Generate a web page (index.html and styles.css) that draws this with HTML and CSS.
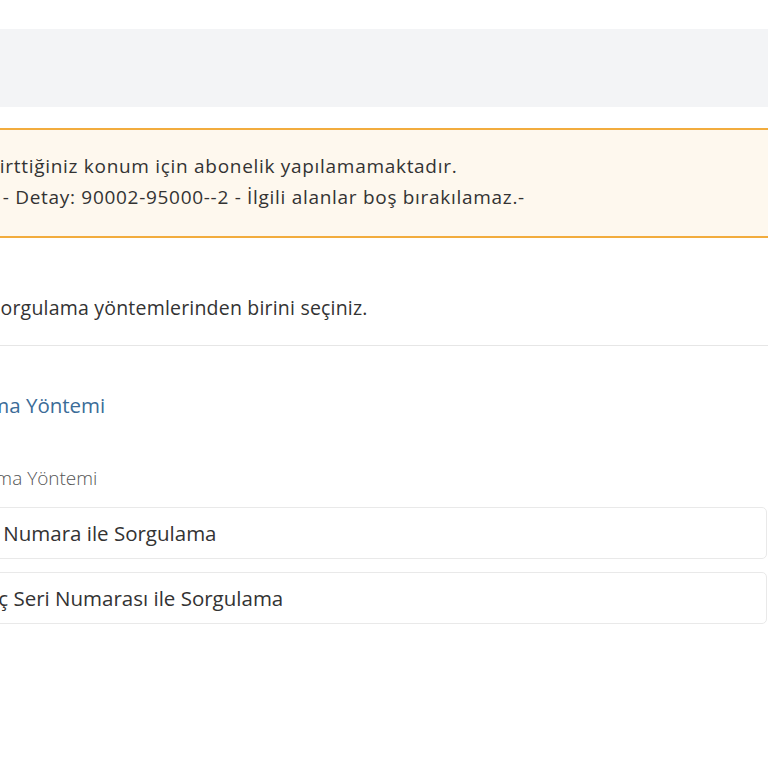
FILE: index.html
```html
<!DOCTYPE html>
<html lang="tr">
<head>
    <meta charset="UTF-8">
    <title>Abonelik</title>
    <link rel="stylesheet" href="styles.css">
</head>
<body>
    <div id="wrap">
        <div class="toolbar"></div>

        <div class="alert">
            <p>Belirttiğiniz konum için abonelik yapılamamaktadır.</p>
            <p>No - Detay: 90002-95000--2 - İlgili alanlar boş bırakılamaz.-</p>
        </div>

        <div class="intro">
            <p>Lütfen sorgulama yöntemlerinden birini seçiniz.</p>
        </div>

        <div class="form">
            <h3>Sorgulama Yöntemi</h3>
            <label class="caption">Sorgulama Yöntemi</label>
            <ul class="options">
                <li><span class="radio"></span><span class="opt">Tekil Numara ile Sorgulama</span></li>
                <li><span class="radio"></span><span class="opt">Sayaç Seri Numarası ile Sorgulama</span></li>
            </ul>
        </div>
    </div>
</body>
</html>
```

FILE: styles.css
```css
html,body{margin:0;padding:0;overflow:hidden;}
body{font-family: "Open Sans", "Liberation Sans", sans-serif;color:#333;background:#fff;}
p,h3,ul,li{margin:0;padding:0;list-style:none;}

#wrap{
    width: 857px;
    margin-left: -90px;
    padding-top: 29px;
}
.toolbar{
    height: 78px;
    margin-right: -40px;
    background-color: #f3f4f6;
}
.alert{
    margin-top: 21px;
    margin-right: -40px;
    padding: 21px 20px 23px 60px;
    background-color: #fef8ee;
    border-top: 2px solid #f2ac3d;
    border-bottom: 2px solid #f2ac3d;
    font-size: 19px;
    letter-spacing: 0.7px;
    line-height: 31px;
}
.intro{
    padding: 56px 0 23px 16px;
    margin-right: -40px;
    border-bottom: 1px solid #e6e6e6;
    font-size: 19.5px;
    letter-spacing: 0.2px;
    line-height: 28px;
}
.form h3{
    margin-top: 45px;
    padding-left: 8px;
    font-size: 20.5px;
    font-weight: normal;
    line-height: 28px;
    color: #3b6c98;
}
.caption{
    display: block;
    margin-top: 45px;
    padding-left: 21px;
    font-size: 19px;
    font-weight: 300;
    line-height: 28px;
    color: #555;
}
.options{
    margin-top: 15px;
}
.options li{
    display: flex;
    align-items: center;
    gap: 10px;
    height: 50px;
    padding-left: 17px;
    margin-bottom: 13px;
    border: 1px solid #e9e9e9;
    border-radius: 5px;
    font-size: 20.5px;
}
.radio{
    flex: none;
    width: 14px;
    height: 14px;
    border: 1px solid #bbb;
    border-radius: 50%;
}
```
